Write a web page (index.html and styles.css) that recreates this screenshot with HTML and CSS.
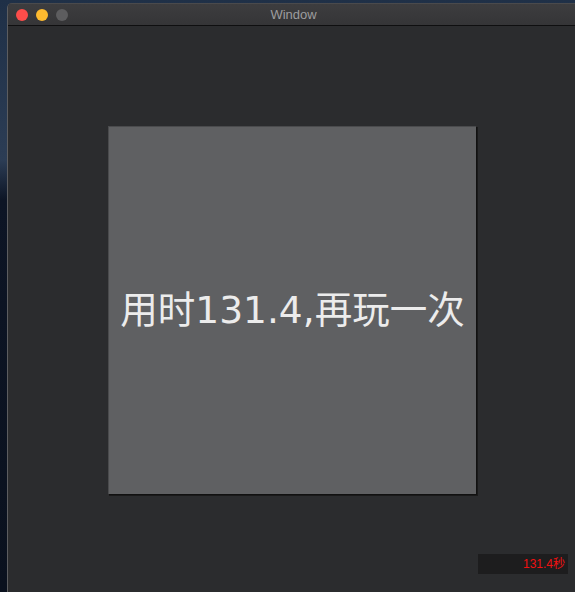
FILE: index.html
```html
<!DOCTYPE html>
<html lang="zh">
<head>
<meta charset="utf-8">
<title>Window</title>
<link rel="stylesheet" href="styles.css">
</head>
<body>
<div class="desktop">
  <div class="window">
    <div class="titlebar">
      <div class="lights">
        <span class="light red"></span>
        <span class="light yellow"></span>
        <span class="light gray"></span>
      </div>
      <div class="title">Window</div>
    </div>
    <div class="content">
      <div class="board">
        <div class="message">用时131.4,再玩一次</div>
      </div>
      <div class="timer">131.4秒</div>
    </div>
  </div>
</div>
</body>
</html>
```
FILE: styles.css
```css
html, body {
  margin: 0;
  padding: 0;
  width: 575px;
  height: 592px;
  overflow: hidden;
}

.desktop {
  width: 575px;
  height: 592px;
  box-sizing: border-box;
  padding: 3px 0 0 7px;
  background: linear-gradient(180deg, #1f3047 0px, #2c3d55 160px, #0d1525 200px, #0a111e 592px);
  display: flex;
}

.window {
  flex: 1;
  display: flex;
  flex-direction: column;
  border-left: 1px solid #5c5d60;
  border-top-left-radius: 5px;
  overflow: hidden;
  background: #2b2c2e;
}

.titlebar {
  height: 21px;
  flex: 0 0 21px;
  position: relative;
  display: flex;
  align-items: center;
  background: linear-gradient(180deg, #3d3d3f 0%, #353537 100%);
  border-bottom: 1px solid #0f0f10;
  border-top: 1px solid #4a4a4c;
  box-sizing: content-box;
}

.lights {
  display: flex;
  gap: 8px;
  padding-left: 8px;
  padding-top: 1px;
}

.light {
  width: 12px;
  height: 12px;
  border-radius: 50%;
  display: block;
}

.red { background: #fd4d4a; }
.yellow { background: #fdba2f; }
.gray { background: #5d5d5f; }

.title {
  position: absolute;
  left: 0;
  right: 0;
  top: 3px;
  text-align: center;
  font-family: "Liberation Sans", "Noto Sans", sans-serif;
  font-size: 13px;
  color: #9d9d9f;
  padding-left: 4px;
}

.content {
  flex: 1;
  background: #2b2c2e;
  display: flex;
  flex-direction: column;
}

.board {
  margin: 100px 0 0 100px;
  width: 367px;
  height: 367px;
  background: #5f6062;
  border-top: 1px solid #4a4b4d;
  border-left: 1px solid #4a4b4d;
  border-right: 1px solid #111;
  border-bottom: 1px solid #111;
  box-shadow: 1px 1px 0 #1a1a1a;
  display: flex;
  align-items: center;
  justify-content: center;
}

.message {
  font-family: "DejaVu Sans", "Noto Sans CJK SC", sans-serif;
  font-size: 37.5px;
  color: #ececec;
  white-space: nowrap;
  margin-top: -8px;
}

.timer {
  margin: 59px 0 0 470px;
  width: 90px;
  height: 20px;
  box-sizing: border-box;
  background: #1d1d1e;
  color: #f01010;
  font-family: "Liberation Sans", "Noto Sans CJK SC", sans-serif;
  font-size: 12px;
  line-height: 20px;
  text-align: right;
  padding-right: 3px;
}
```
